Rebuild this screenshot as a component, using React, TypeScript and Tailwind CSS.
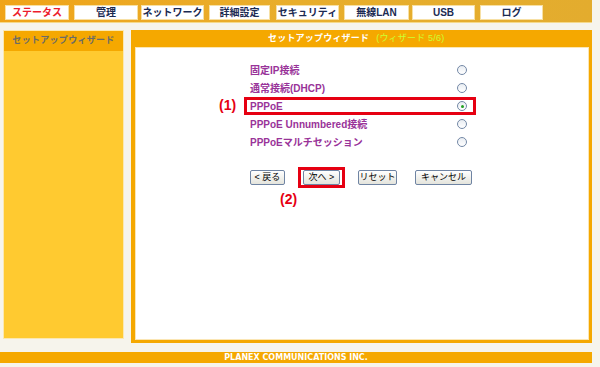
const jp = "font-['Liberation_Sans','Noto_Sans_CJK_JP',sans-serif]";

const tabs = [
  { label: "ステータス", w: "w-[64px]", ml: "ml-[5px]", active: true },
  { label: "管理", w: "w-[64px]", ml: "ml-[5px]" },
  { label: "ネットワーク", w: "w-[63px]", ml: "ml-[3px]" },
  { label: "詳細設定", w: "w-[61px]", ml: "ml-[5px]" },
  { label: "セキュリティ", w: "w-[63px]", ml: "ml-[6px]" },
  { label: "無線LAN", w: "w-[65px]", ml: "ml-[5px]" },
  { label: "USB", w: "w-[63px]", ml: "ml-[3px]" },
  { label: "ログ", w: "w-[63px]", ml: "ml-[5px]" },
];

const options = [
  "固定IP接続",
  "通常接続(DHCP)",
  "PPPoE",
  "PPPoE Unnumbered接続",
  "PPPoEマルチセッション",
];

function Radio({ checked }: { checked?: boolean }) {
  return (
    <span className="flex h-[10px] w-[10px] items-center justify-center rounded-full border border-[#7388a6] bg-gradient-to-b from-[#e9edf2] to-white">
      {checked && <span className="h-[3px] w-[3px] rounded-full bg-[#22a022]" />}
    </span>
  );
}

function Btn({ label, w }: { label: string; w: string }) {
  return (
    <button
      className={`${w} flex h-[15px] items-center justify-center rounded-[2px] border border-[#6f84a3] bg-gradient-to-b from-white to-[#e4e4dc] text-[9px] leading-none text-black`}
    >
      {label}
    </button>
  );
}

export default function App() {
  return (
    <div className={`${jp} flex h-[367px] w-[600px] flex-col bg-[#f6f4ec]`}>
      {/* tab bar */}
      <div className="flex h-[23px] w-[592px] items-start border-b border-[#f5d98a] bg-gradient-to-r from-[#f0a418] via-[#e8ae2c] to-[#e3ac2e] pt-[5px]">
        {tabs.map((t) => (
          <div
            key={t.label}
            className={`${t.w} ${t.ml} flex h-[15px] items-center justify-center border border-[#f7e0a4] bg-white text-[10px] font-bold ${
              t.active ? "text-[#ec1c2c]" : "text-[#1b2a52]"
            }`}
          >
            {t.label}
          </div>
        ))}
      </div>

      <div className="mt-[7px] flex">
        {/* sidebar */}
        <div className="ml-[3px] flex h-[309px] w-[121px] flex-col border border-[#fbe8b0]">
          <div className="flex h-[20px] items-center justify-center bg-[#f5a800] text-[9px] font-bold tracking-[0.3px] text-[#6b6b66]">
            セットアップウィザード
          </div>
          <div className="flex-1 bg-[#ffca30]" />
        </div>

        {/* main panel */}
        <div className="ml-[7px] flex h-[313px] w-[461px] flex-col bg-[#f5a800] pb-[3px] pl-[4px] pr-[3px]">
          <div className="flex h-[17px] items-center pl-[133px] text-[9px] font-bold tracking-[0.2px] text-white">
            セットアップウィザード
            <span className="ml-[7px] font-normal text-[#ccff33]">(ウィザード 5/6)</span>
          </div>
          <div className="flex-1 border border-[#fbe6b4] bg-white">
            <div className="ml-[108px] mt-[13px] flex w-[232px] flex-col">
              {options.map((o, i) => (
                <div key={o} className="relative flex h-[18px] items-center justify-between pl-[6px] pr-[9px]">
                  <span className="text-[10px] font-bold text-[#993399]">{o}</span>
                  <Radio checked={i === 2} />
                  {i === 2 && (
                    <>
                      <span className="absolute inset-0 border-[3px] border-[#e60012]" />
                      <span className="absolute left-[-25px] top-[-2px] text-[14px] font-bold text-[#e60012]">
                        (1)
                      </span>
                    </>
                  )}
                </div>
              ))}
            </div>

            <div className="ml-[114px] mt-[19px] flex items-start">
              <Btn label="< 戻る" w="w-[35px]" />
              <div className="relative ml-[18px]">
                <Btn label="次へ >" w="w-[37px]" />
                <span className="absolute left-[-5px] top-[-3px] h-[21px] w-[47px] border-[3px] border-[#e60012]" />
                <span className="absolute left-[-23px] top-[19px] text-[14px] font-bold text-[#e60012]">
                  (2)
                </span>
              </div>
              <div className="ml-[18px]">
                <Btn label="リセット" w="w-[39px]" />
              </div>
              <div className="ml-[18px]">
                <Btn label="キャンセル" w="w-[57px]" />
              </div>
            </div>
          </div>
        </div>
      </div>

      {/* footer */}
      <div className="mt-[9px] flex h-[11px] w-[592px] items-center justify-center bg-[#f5a800] font-['DejaVu_Sans',sans-serif] text-[8px] font-bold leading-none text-white">
        PLANEX COMMUNICATIONS INC.
      </div>
    </div>
  );
}
